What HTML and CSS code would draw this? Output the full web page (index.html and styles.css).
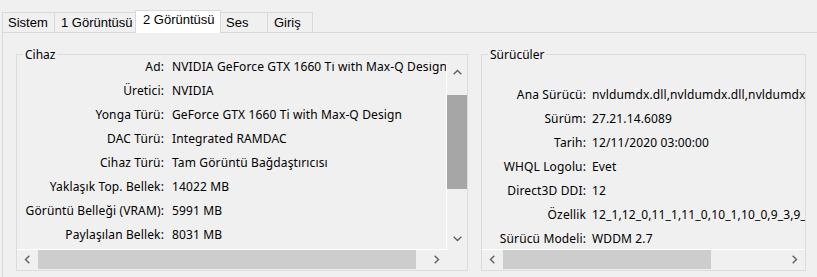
FILE: index.html
```html
<!DOCTYPE html>
<html lang="tr">
<head>
<meta charset="utf-8">
<title>DirectX Tanı Aracı</title>
<link rel="stylesheet" href="styles.css">
</head>
<body>
<div class="tabbar">
  <div class="tab tab-sistem">Sistem</div>
  <div class="tab tab-g1">1 Görüntüsü</div>
  <div class="tab tab-g2 active">2 Görüntüsü</div>
  <div class="tab tab-ses">Ses</div>
  <div class="tab tab-giris last">Giriş</div>
</div>
<div class="panel">
  <fieldset class="group group-device">
    <legend>Cihaz</legend>
    <div class="frame frame-device">
      <div class="viewport vp-device">
        <div class="rows rows-device">
          <div class="lbl">Ad:</div><div class="val">NVIDIA GeForce GTX 1660 Ti with Max-Q Design</div>
          <div class="lbl">Üretici:</div><div class="val">NVIDIA</div>
          <div class="lbl">Yonga Türü:</div><div class="val">GeForce GTX 1660 Ti with Max-Q Design</div>
          <div class="lbl">DAC Türü:</div><div class="val">Integrated RAMDAC</div>
          <div class="lbl">Cihaz Türü:</div><div class="val">Tam Görüntü Bağdaştırıcısı</div>
          <div class="lbl">Yaklaşık Top. Bellek:</div><div class="val">14022 MB</div>
          <div class="lbl">Görüntü Belleği (VRAM):</div><div class="val">5991 MB</div>
          <div class="lbl">Paylaşılan Bellek:</div><div class="val">8031 MB</div>
        </div>
      </div>
      <div class="vscroll">
        <div class="sbtn"><svg width="9" height="6" viewBox="0 0 9 6"><polyline points="0.7,5.3 4.5,1.5 8.3,5.3" fill="none" stroke="#606060" stroke-width="1.4"/></svg></div>
        <div class="vthumb"></div>
        <div class="sbtn sbtn-end"><svg width="9" height="6" viewBox="0 0 9 6"><polyline points="0.7,0.7 4.5,4.5 8.3,0.7" fill="none" stroke="#606060" stroke-width="1.4"/></svg></div>
      </div>
      <div class="hscroll hs-device">
        <div class="sbtn"><svg width="6" height="9" viewBox="0 0 6 9"><polyline points="5.3,0.7 1.5,4.5 5.3,8.3" fill="none" stroke="#606060" stroke-width="1.4"/></svg></div>
        <div class="hthumb hthumb-device"></div>
        <div class="sbtn sbtn-end"><svg width="6" height="9" viewBox="0 0 6 9"><polyline points="0.7,0.7 4.5,4.5 0.7,8.3" fill="none" stroke="#606060" stroke-width="1.4"/></svg></div>
      </div>
      <div class="corner"></div>
    </div>
  </fieldset>
  <fieldset class="group group-driver">
    <legend>Sürücüler</legend>
    <div class="frame frame-driver">
      <div class="viewport vp-driver">
        <div class="rows rows-driver">
          <div class="lbl">Ana Sürücü:</div><div class="val">nvldumdx.dll,nvldumdx.dll,nvldumdx.dll,nvldumdx.dll</div>
          <div class="lbl">Sürüm:</div><div class="val">27.21.14.6089</div>
          <div class="lbl">Tarih:</div><div class="val">12/11/2020 03:00:00</div>
          <div class="lbl">WHQL Logolu:</div><div class="val">Evet</div>
          <div class="lbl">Direct3D DDI:</div><div class="val">12</div>
          <div class="lbl">Özellik</div><div class="val">12_1,12_0,11_1,11_0,10_1,10_0,9_3,9_2,9_1</div>
          <div class="lbl">Sürücü Modeli:</div><div class="val">WDDM 2.7</div>
        </div>
      </div>
      <div class="hscroll hs-driver">
        <div class="sbtn"><svg width="6" height="9" viewBox="0 0 6 9"><polyline points="5.3,0.7 1.5,4.5 5.3,8.3" fill="none" stroke="#606060" stroke-width="1.4"/></svg></div>
        <div class="hthumb hthumb-driver"></div>
        <div class="sbtn sbtn-end"><svg width="6" height="9" viewBox="0 0 6 9"><polyline points="0.7,0.7 4.5,4.5 0.7,8.3" fill="none" stroke="#606060" stroke-width="1.4"/></svg></div>
      </div>
    </div>
  </fieldset>
</div>
</body>
</html>
```
FILE: styles.css
```css
* { box-sizing: border-box; }
html, body {
  margin: 0;
  padding: 0;
  background: #f0f0f0;
  overflow: hidden;
}
body {
  width: 817px;
  height: 277px;
  font-family: "Noto Sans", "Segoe UI", "Liberation Sans", sans-serif;
  font-size: 12px;
  color: #000;
}

/* tabs */
.tabbar {
  display: flex;
  align-items: flex-end;
  height: 22px;
  margin-top: 10px;
  padding-left: 2px;
  font-family: "Liberation Sans", Arial, sans-serif;
  font-size: 13px;
}
.tab {
  height: 20px;
  line-height: 19px;
  border-left: 1px solid #d9d9d9;
  border-top: 1px solid #d9d9d9;
  background: #f0f0f0;
  white-space: nowrap;
}
.tab.last { border-right: 1px solid #d9d9d9; }
.tab-sistem { width: 52px; padding-left: 5px; }
.tab-g1 { width: 81px; padding-left: 6px; }
.tab-g2 { width: 86px; padding-left: 7px; }
.tab-ses { width: 47px; padding-left: 5px; margin-left: -1px; }
.tab-giris { width: 46px; padding-left: 6px; }
.tab.active {
  position: relative;
  z-index: 1;
  height: 23px;
  line-height: 18px;
  margin-bottom: -1px;
  background: #fff;
  border-right: 1px solid #d9d9d9;
}

/* panel */
.panel {
  margin-left: 2px;
  height: 245px;
  border-top: 1px solid #d9d9d9;
  border-left: 1px solid #d9d9d9;
  padding: 14px 0 0 13px;
  display: flex;
  gap: 13px;
  align-items: flex-start;
}

.group {
  margin: 0;
  padding: 0;
  min-width: 0;
  border: 1px solid #dcdcdc;
  height: 224px;
}
.group legend {
  margin-left: 6px;
  padding: 0 2px;
  line-height: 15px;
  height: 15px;
}
.group-device { width: 452px; }
.group-driver { width: 325px; }

.frame {
  display: grid;
}
.frame-device {
  grid-template-columns: 430px 20px;
  grid-template-rows: 188px 20px;
}
.frame-driver {
  grid-template-columns: 323px;
  grid-template-rows: 188px 20px;
}

.viewport {
  overflow: hidden;
  border-bottom: 1px solid #fff;
}
.vp-device { border-right: 1px solid #fff; }

.rows {
  display: grid;
  white-space: nowrap;
  line-height: 24px;
  letter-spacing: 0.13px;
}
.rows-device {
  grid-template-columns: 147px auto;
  column-gap: 8px;
  margin-top: -7px;
}
.rows-driver {
  grid-template-columns: 104px auto;
  column-gap: 6px;
  padding-top: 21px;
}
.lbl { text-align: right; }

/* scrollbars */
.sbtn {
  width: 20px;
  height: 20px;
  display: flex;
  align-items: center;
  justify-content: center;
  flex: none;
}
.sbtn svg { display: block; }
.vscroll {
  display: flex;
  flex-direction: column;
  height: 187px;
}
.vthumb {
  margin-top: 13px;
  height: 94px;
  background: #a6a6a6;
}
.vscroll .sbtn-end { margin-top: auto; }
.hscroll {
  display: flex;
  height: 20px;
}
.hthumb {
  height: 19px;
  background: #cdcdcd;
  margin-left: 1px;
}
.hthumb-device { width: 378px; }
.hthumb-driver { width: 208px; }
.hscroll .sbtn-end { margin-left: auto; }
.hscroll .sbtn { height: 19px; }
```
